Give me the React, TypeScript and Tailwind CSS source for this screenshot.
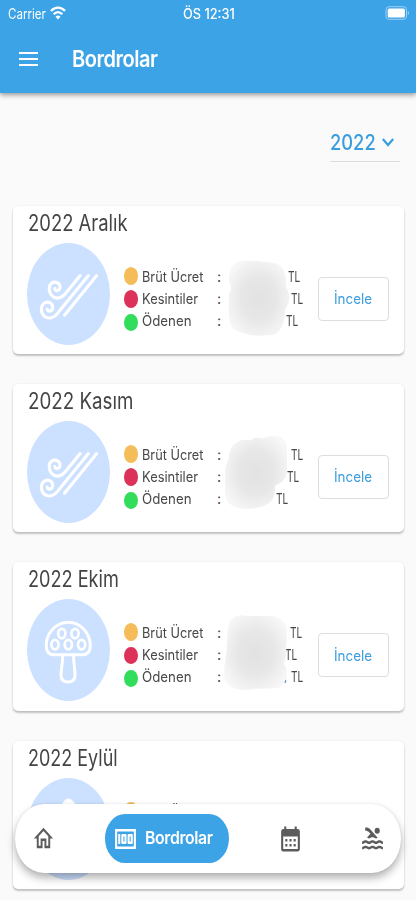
import { useLayoutEffect, useRef, useState } from "react";
import type { ReactNode } from "react";
import { MdCalendarMonth, MdMoney, MdOutlineHome, MdPool } from "react-icons/md";

/** Single line of text condensed or widened to an exact width. */
function Fit({ w, className = "", children }: { w: number; className?: string; children: ReactNode }) {
  const ref = useRef<HTMLSpanElement>(null);
  const [scale, setScale] = useState(1);
  useLayoutEffect(() => {
    if (ref.current) setScale(w / ref.current.offsetWidth);
  }, [w]);
  return (
    <span className="block shrink-0 whitespace-nowrap" style={{ width: w }}>
      <span ref={ref} className={`inline-block origin-left ${className}`} style={{ transform: `scaleX(${scale})` }}>
        {children}
      </span>
    </span>
  );
}

function Wind() {
  return (
    <svg viewBox="0 0 83 102" className="h-full w-full" fill="none" stroke="white" strokeWidth="3.1" strokeLinecap="round" strokeLinejoin="round">
      <path d="M53.2 32.6 L38.5 50.5 C34 56 29 56.200 25.700 53.300 C21.300 49.500 21.300 42.800 24.500 40.300 C28 37.700 33.300 40 33 44.400 C32.600 48.300 28 48.500 27.800 45.600" />
      <path d="M61.400 32.600 L32 68.500 C27 76 20.800 76.200 17 73 C13 69 13.800 62 17.800 59.800 C22 57.800 26.200 60.800 25.600 65 C25 69 20.300 69 20.200 66" />
      <path d="M69.700 32.600 L37.500 72.300" />
    </svg>
  );
}

const SPOTS = [
  [34.800, 34.500],
  [48, 34.500],
  [28, 45.600],
  [41.300, 45.600],
  [54.600, 45.600],
];

function Mushroom() {
  return (
    <svg viewBox="0 0 83 102" className="h-full w-full" fill="none" stroke="white" strokeWidth="3" strokeLinecap="round" strokeLinejoin="round">
      <path d="M41.300 23.300 C28.500 23.300 19.200 35 19.200 46.500 C19.200 53 22 55.700 27 55.700 H55.500 C60.500 55.700 63.300 53 63.300 46.500 C63.300 35 54 23.300 41.300 23.300 Z" />
      <path d="M35.800 56 C35.800 64 34 70 34 76 C34 80.500 36.500 83 41 83 C45.500 83 48 80.500 48 76 C48 70 46.500 64 46.500 56" />
      {SPOTS.map(([x, y]) => (
        <ellipse key={`${x}-${y}`} cx={x} cy={y} rx="3.600" ry="4.700" strokeWidth="2.700" />
      ))}
    </svg>
  );
}

function Drop() {
  return (
    <svg viewBox="0 0 83 102" className="h-full w-full" fill="white">
      <path d="M41.500 20.500 C38.500 20.500 36 24 33.500 28.500 C26 44 25 68 41.500 68 C58 68 57 44 49.500 28.500 C47 24 44.500 20.500 41.500 20.500 Z" />
    </svg>
  );
}

type Month = {
  title: string;
  titleWidth: number;
  icon: ReactNode;
  currency: number[];
  blob: string;
  comma: boolean;
};

const MONTHS: Month[] = [
  {
    title: "2022 Aralık",
    titleWidth: 100,
    icon: <Wind />,
    currency: [288.500, 292, 287],
    blob: "M14 2 C22 -1 42 2 50 3 C58 4 62 12 62 21 L62 27 C67 35 66 42 61 50 C61 62 57 74 48 75 C34 77 20 75 11 70 C3 66 5 50 5 37 C5 30 8 29 7 26 C3 23 4 6 14 2 Z",
    comma: true,
  },
  {
    title: "2022 Kasım",
    titleWidth: 105,
    icon: <Wind />,
    currency: [291.800, 288, 276.500],
    blob: "M14 4 C19 0 25 4 29 1 C34 -2 39 2 43 -1 C54 -5 63 1 63 9 L63 30 C63 42 58 44 51 48 C52 61 46 66 37 69 C25 72 10 72 4 64 C-1 58 2 47 1 35 C0 28 5 25 5 17 C6 11 9 6 14 4 Z",
    comma: false,
  },
  {
    title: "2022 Ekim",
    titleWidth: 91,
    icon: <Mushroom />,
    currency: [291.300, 286.300, 292.300],
    blob: "M10 1 C18 -3 22 1 29 0 L46 0 C57 0 64 8 63 18 L62 38 C62 43 60 45 60 48 C65 54 64 68 54 72 C42 73 32 72 24 74 C10 75 0 69 0 59 C0 48 3 38 3 27 C4 15 3 5 10 1 Z",
    comma: true,
  },
  {
    title: "2022 Eylül",
    titleWidth: 89.500,
    icon: <Drop />,
    currency: [288],
    blob: "",
    comma: false,
  },
];

const ROWS = [
  { label: "Brüt Ücret", width: 61.500, dot: "bg-[#f4bd59]" },
  { label: "Kesintiler", width: 56, dot: "bg-[#dc3159]" },
  { label: "Ödenen", width: 49.500, dot: "bg-[#32dd5c]" },
];

function Card({ month, index }: { month: Month; index: number }) {
  const rows = ROWS.slice(0, month.currency.length);
  return (
    <article className="h-[148.200px] w-[391px] shrink-0 rounded-[5px] bg-white shadow-[0_2px_2px_rgba(0,0,0,0.22),0_0_2px_rgba(0,0,0,0.09)]">
      <h2 className="flex h-[37px] pl-[15.500px] text-[22.500px] leading-[33px] text-[#444]">
        <Fit w={month.titleWidth}>{month.title}</Fit>
      </h2>
      <div className="flex h-[102px]">
        <div className="ml-[14px] h-[102px] w-[83px] shrink-0 overflow-hidden rounded-[50%] bg-[#cce0ff]">{month.icon}</div>
        <div className="ml-[14px] flex flex-col gap-[5.800px] pt-[24px]">
          {rows.map((row) => (
            <span key={row.label} className={`h-[17.500px] w-[14px] rounded-[50%] ${row.dot}`} />
          ))}
        </div>
        <div className="ml-1 w-[75.500px] pt-[23px] text-[14.500px] leading-[22px] text-[#484848]">
          {rows.map((row) => (
            <Fit key={row.label} w={row.width}>
              {row.label}
            </Fit>
          ))}
        </div>
        <div className="relative w-[100.500px] pt-[23px] text-[14.500px] leading-[22px] text-[#484848]">
          {month.currency.map((x, row) => (
            <div key={row} className="flex">
              <span className="w-1 shrink-0">:</span>
              <div style={{ marginLeft: x - 222 - (row === 2 && month.comma ? 7.5 : 0) }} className="flex">
                {row === 2 && month.comma && <span className="w-[7.500px] text-[12px]">,</span>}
                <Fit w={12.500}>TL</Fit>
              </div>
            </div>
          ))}
          {month.blob && (
            <svg className="absolute left-[6.500px] top-[13px] h-[86px] w-[70px] overflow-visible" viewBox="0 -4 70 86">
              <defs>
                <radialGradient id={`smudge-${index}`} cx="50%" cy="50%" r="58%">
                  <stop offset="0" stopColor="#e2e2e2" />
                  <stop offset="0.500" stopColor="#e7e7e7" />
                  <stop offset="1" stopColor="#f7f7f7" />
                </radialGradient>
                <filter id={`soft-${index}`}>
                  <feGaussianBlur stdDeviation="0.700" />
                </filter>
              </defs>
              <path d={month.blob} fill={`url(#smudge-${index})`} filter={`url(#soft-${index})`} />
            </svg>
          )}
        </div>
        <button className="mt-[34px] flex h-[44px] w-[71px] shrink-0 items-center justify-center rounded-[4px] border border-[#dedede] text-[14.500px] text-[#3a9ddd]">
          <Fit w={38}>İncele</Fit>
        </button>
      </div>
    </article>
  );
}

export default function App() {
  return (
    <div className="relative flex h-[900px] w-[416px] flex-col overflow-hidden bg-[#fafafa] font-['Inter',sans-serif]">
      <header className="h-[93px] shrink-0 bg-[#3ca3e7] text-white shadow-[0_2px_5px_rgba(0,0,0,0.4)]">
        <div className="flex h-[25px] items-center pl-2 pr-[7px]">
          <Fit w={38} className="text-[14px] leading-[18px]">
            Carrier
          </Fit>
          <svg className="ml-1 h-[14px] w-4" viewBox="0 0 16 14" fill="none" stroke="white" strokeWidth="2.300">
            <path d="M1 5 C5 0.500 11 0.500 15 5" />
            <path d="M3.700 8.200 C6.300 5.300 9.700 5.300 12.300 8.200" />
            <path d="M8 13.500 L5.500 10.700 Q8 8.500 10.500 10.700 Z" fill="white" stroke="none" />
          </svg>
          <div className="ml-[116.500px]">
            <Fit w={52} className="text-[14px] font-medium leading-[18px]">
              ÖS 12:31
            </Fit>
          </div>
          <svg className="ml-auto h-[14px] w-6" viewBox="0 0 24 14">
            <rect x="1" y="0.700" width="20.500" height="12.600" rx="3" fill="none" stroke="#9ed0f3" />
            <rect x="2.700" y="2.400" width="17.200" height="9.200" rx="1.500" fill="white" />
            <path d="M22.800 5 V9 Q24 8.500 24 7 Q24 5.500 22.800 5" fill="#9ed0f3" />
          </svg>
        </div>
        <div className="flex h-[68px] items-center pl-[19px]">
          <div className="flex w-[19px] flex-col gap-[4px]">
            <span className="h-[2px] bg-white" />
            <span className="h-[2px] bg-white" />
            <span className="h-[2px] bg-white" />
          </div>
          <h1 className="ml-[34px]">
            <Fit w={85.500} className="text-[22.500px] font-semibold leading-[30px] tracking-tight">
              Bordrolar
            </Fit>
          </h1>
        </div>
      </header>

      <div className="flex h-[113px] shrink-0 justify-end pr-4 pt-[37px]">
        <div className="flex h-[32px] w-[70.500px] items-center border-b border-[#dedede] pb-[6px] text-[#3a9ddd]">
          <Fit w={46} className="text-[21.500px] font-medium leading-[25px]">
            2022
          </Fit>
          <svg className="ml-[6px] h-[9px] w-3" viewBox="0 0 12 9" fill="none" stroke="currentColor" strokeWidth="2.200">
            <path d="M0.800 1 L6 7 L11.200 1" />
          </svg>
        </div>
      </div>

      <main className="flex flex-col gap-[30px] pl-[12.500px]">
        {MONTHS.map((month, index) => (
          <Card key={month.title} month={month} index={index} />
        ))}
      </main>

      <nav className="absolute left-[15px] top-[804px] flex h-[69px] w-[386px] items-center rounded-[29px/34.500px] bg-white text-[#5c5c5c] shadow-[0_5px_8px_rgba(0,0,0,0.3),0_0_2px_rgba(0,0,0,0.1)]">
        <MdOutlineHome preserveAspectRatio="none" className="ml-[17px] h-[29px] w-[23px]" />
        <div className="ml-[50px] flex h-[49px] w-[124px] items-center rounded-[20px/24.500px] bg-[#3ca3e7] text-white">
          <MdMoney preserveAspectRatio="none" className="ml-[8px] h-[30px] w-[25px]" />
          <div className="ml-[7px]">
            <Fit w={68} className="text-[17.500px] font-semibold tracking-tight">
              Bordrolar
            </Fit>
          </div>
        </div>
        <MdCalendarMonth preserveAspectRatio="none" className="ml-[49px] h-[30px] w-[25px]" />
        <MdPool preserveAspectRatio="none" className="ml-[56.500px] h-[29px] w-[25px]" />
      </nav>
    </div>
  );
}
